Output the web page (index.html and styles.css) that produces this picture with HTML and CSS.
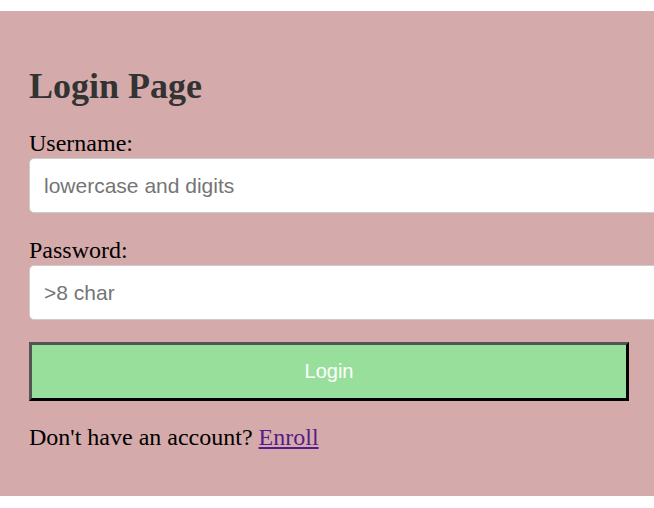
FILE: index.html
```html
<!DOCTYPE html>
<html lang="en">
<head>
<meta charset="utf-8">
<title>Login Page</title>
<link rel="stylesheet" href="styles.css">
</head>
<body>
<div class="panel">
  <h2 class="title">Login Page</h2>
  <form class="form">
    <label class="label" for="username">Username:</label>
    <input class="field" id="username" type="text" placeholder="lowercase and digits">
    <label class="label" for="password">Password:</label>
    <input class="field" id="password" type="password" placeholder="&gt;8 char">
    <button class="btn" type="button">Login</button>
  </form>
  <p class="note">Don't have an account? <a class="link" href="#">Enroll</a></p>
</div>
</body>
</html>
```
FILE: styles.css
```css
html, body {
  margin: 0;
  padding: 0;
  background: #ffffff;
}
body {
  padding-top: 11px;
  font-family: "Liberation Serif", "Times New Roman", serif;
  font-size: 24px;
  overflow: hidden;
}
.panel {
  background: #d5aaaa;
  padding: 54px 0 45px 29px;
  overflow: hidden;
}
.title {
  margin: 0 0 22px;
  font-size: 36px;
  line-height: 42px;
  font-weight: bold;
  color: #333333;
}
.form {
  display: flex;
  flex-direction: column;
  align-items: flex-start;
}
.label {
  display: block;
  font-size: 24px;
  line-height: 28px;
  margin-bottom: 1px;
  color: #000;
}
.field {
  display: block;
  width: 100%;
  box-sizing: content-box;
  margin: 0 0 23px;
  padding: 14px;
  border: 1px solid #cccccc;
  border-radius: 5px;
  background: #ffffff;
  font-family: "Liberation Sans", Arial, sans-serif;
  font-size: 21px;
  line-height: 25px;
  height: 25px;
  color: #000;
  outline: none;
}
.field::placeholder {
  color: #757575;
}
.btn {
  display: block;
  width: 600px;
  margin: -1px 0 0;
  padding: 15px 0;
  border-style: solid;
  border-width: 3px;
  border-color: #545454 #000000 #000000 #545454;
  background: #98df9b;
  color: #ffffff;
  font-family: "Liberation Sans", Arial, sans-serif;
  font-size: 20px;
  line-height: 23px;
  cursor: pointer;
}
.note {
  margin: 22px 0 0;
  font-size: 24px;
  line-height: 28px;
  color: #000;
}
.link {
  color: #551a8b;
  text-decoration: underline;
}
```
